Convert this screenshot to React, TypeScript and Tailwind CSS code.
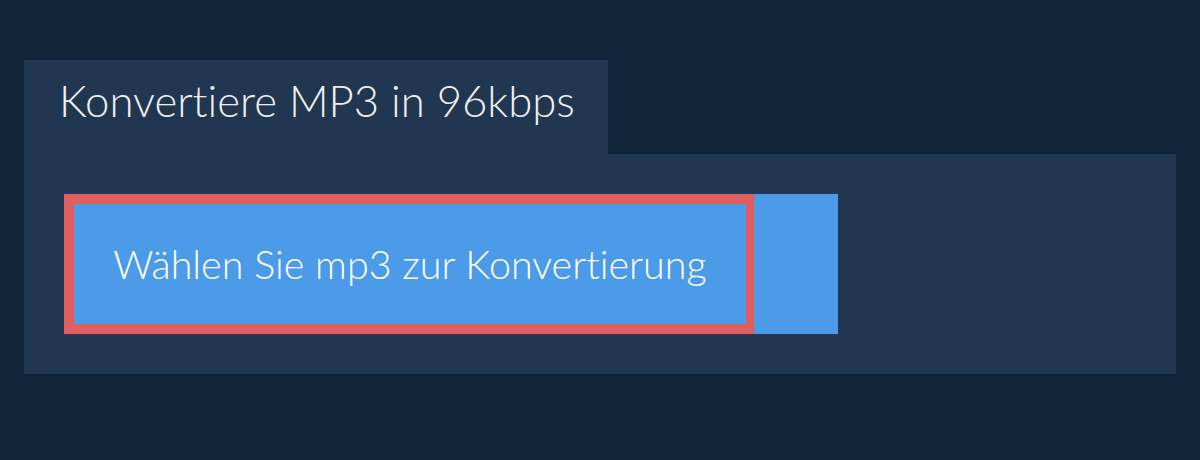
import React from "react";

export default function App() {
  return (
    <div className="w-[1200px] h-[460px] bg-[#11243a] pt-[60px] px-[24px] [font-variant-ligatures:none]" style={{ fontFamily: "Lato, 'Noto Sans', sans-serif" }}>
      <div className="flex">
        <div className="w-[584px] h-[94px] bg-[#213650] pl-[35px] pt-[18px]">
          <h1 className="text-[43.7px] leading-[44px] text-[#f0f0f0] font-light whitespace-nowrap">Konvertiere MP3 in 96kbps</h1>
        </div>
      </div>
      <div className="bg-[#213650] p-[40px]">
        <div className="flex w-[774px] h-[140px] bg-[#4b9be8]">
          <div className="w-[690px] h-[140px] border-t-[10px] border-l-[10px] border-b-[10px] border-r-[8px] border-[#de5f5e] flex items-center justify-center">
            <span className="text-[39.5px] leading-[42px] text-white font-light whitespace-nowrap">Wählen Sie mp3 zur Konvertierung</span>
          </div>
        </div>
      </div>
    </div>
  );
}
